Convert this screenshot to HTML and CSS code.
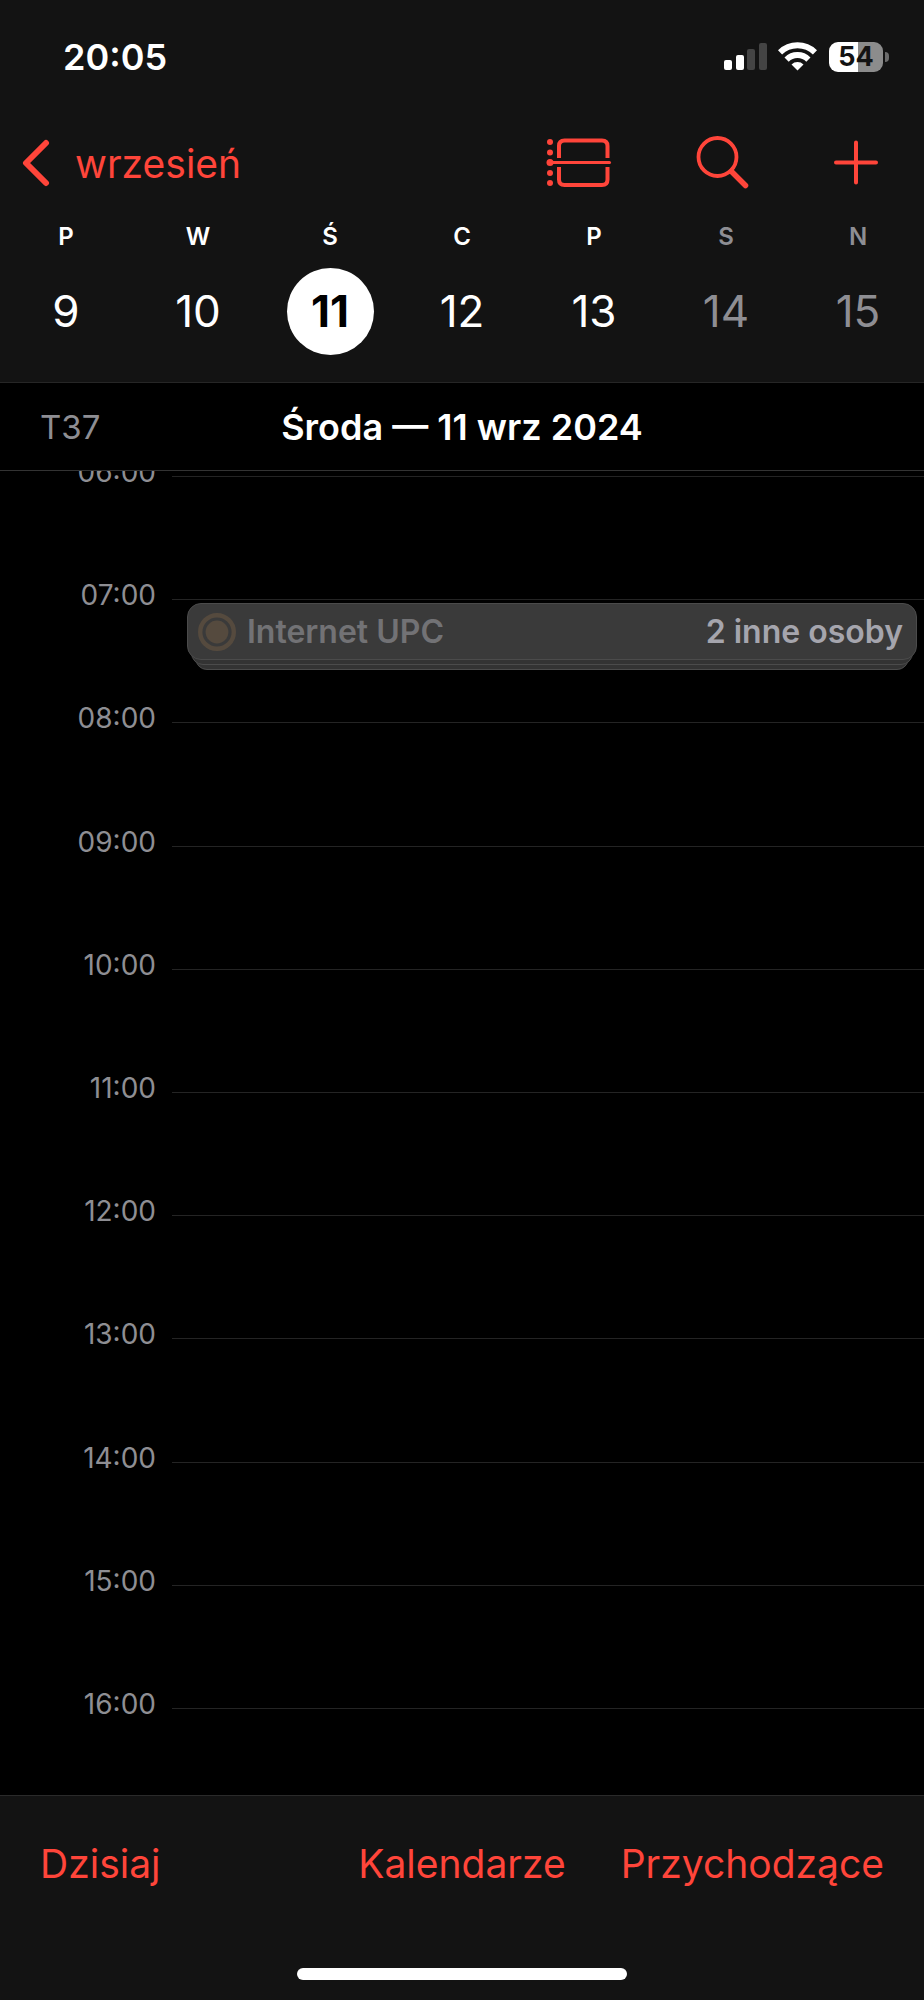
FILE: index.html
```html
<!DOCTYPE html>
<html lang="pl">
<head>
  <meta charset="utf-8">
  <meta name="viewport" content="width=device-width, initial-scale=1">
  <title>Kalendarz</title>
  <link rel="stylesheet" href="styles.css">
</head>
<body>
  <div class="screen">
    <header class="top">
      <div class="status">
        <time class="clock">20:05</time>
        <div class="indicators">
          <svg class="signal" width="44" height="30" viewBox="0 0 44 30" aria-hidden="true">
            <rect x="0" y="18" width="8" height="10" rx="2" fill="#fff"/>
            <rect x="12" y="13" width="8" height="15" rx="2" fill="#fff"/>
            <rect x="23" y="7" width="8" height="21" rx="2" fill="#444"/>
            <rect x="35" y="1" width="8" height="27" rx="2" fill="#444"/>
          </svg>
          <svg class="wifi" width="39" height="30" viewBox="0 0 39 30" aria-hidden="true">
            <g fill="none" stroke="#fff" stroke-width="6">
              <path d="M2 10.400a25 25 0 0 1 35 0"/>
              <path d="M8.600 17.600a15.500 15.500 0 0 1 21.800 0"/>
            </g>
            <path d="M19.500 28.400l-6-6a8.600 8.600 0 0 1 12 0z" fill="#fff"/>
          </svg>
          <div class="battery"><span class="battery-body">54</span><span class="battery-cap"></span></div>
        </div>
      </div>
      <nav class="nav">
        <a class="back" href="#month">
          <svg width="28" height="48" viewBox="0 0 28 48" aria-hidden="true"><path d="M24 4L4 24l20 20" fill="none" stroke="currentColor" stroke-width="6" stroke-linecap="round" stroke-linejoin="round"/></svg>
          <span>wrzesień</span>
        </a>
        <div class="actions">
          <button class="icon-button" type="button" aria-label="Lista">
            <svg width="66" height="54" viewBox="0 0 66 54" aria-hidden="true">
              <g fill="currentColor"><circle cx="4" cy="6" r="3"/><circle cx="4" cy="16.500" r="3"/><circle cx="4" cy="26.500" r="3.500"/><circle cx="4" cy="37" r="3"/><circle cx="4" cy="47" r="3"/></g>
              <g fill="none" stroke="currentColor"><path stroke-width="4" d="M13 22V10q0-5.500 5.500-5.500h37.500q5.500 0 5.500 5.500v12M13 31v12.500q0 5.500 5.500 5.500h37.500q5.500 0 5.500-5.500V31"/><path stroke-width="3" stroke-linecap="round" d="M4 26.500h59.500"/></g>
            </svg>
          </button>
          <button class="icon-button" type="button" aria-label="Szukaj">
            <svg width="54" height="54" viewBox="0 0 54 54" aria-hidden="true"><g fill="none" stroke="currentColor"><circle cx="21.500" cy="21" r="19" stroke-width="3.800"/><path d="M35.500 35.500l14 14" stroke-width="5.500" stroke-linecap="round"/></g></svg>
          </button>
          <button class="icon-button" type="button" aria-label="Dodaj">
            <svg width="44" height="54" viewBox="0 0 44 54" aria-hidden="true"><path d="M2 26.500h40M22 6.500v40" stroke="currentColor" stroke-width="4" stroke-linecap="round"/></svg>
          </button>
        </div>
      </nav>
      <div class="week">
        <div class="day"><span class="day-name">P</span><button class="day-number" type="button">9</button></div>
        <div class="day"><span class="day-name">W</span><button class="day-number" type="button">10</button></div>
        <div class="day"><span class="day-name">Ś</span><button class="day-number selected" type="button" aria-current="date">11</button></div>
        <div class="day"><span class="day-name">C</span><button class="day-number" type="button">12</button></div>
        <div class="day"><span class="day-name">P</span><button class="day-number" type="button">13</button></div>
        <div class="day weekend"><span class="day-name">S</span><button class="day-number" type="button">14</button></div>
        <div class="day weekend"><span class="day-name">N</span><button class="day-number" type="button">15</button></div>
      </div>
    </header>

    <div class="date-bar">
      <span class="week-number">T37</span>
      <h1 class="date-title">Środa — 11 wrz 2024</h1>
    </div>

    <main class="timeline">
      <div class="hour"><span class="hour-label">06:00</span><div class="slot"></div></div>
      <div class="hour">
        <span class="hour-label">07:00</span>
        <div class="slot">
          <button class="event" type="button">
            <span class="event-face">
              <svg width="38" height="38" viewBox="0 0 38 38" aria-hidden="true"><circle cx="19" cy="19" r="16.800" fill="none" stroke="#554a3e" stroke-width="4.400"/><circle cx="19" cy="19" r="11.400" fill="#554a3e"/></svg>
              <span class="event-title">Internet UPC</span>
              <span class="event-people">2 inne osoby</span>
            </span>
          </button>
        </div>
      </div>
      <div class="hour"><span class="hour-label">08:00</span><div class="slot"></div></div>
      <div class="hour"><span class="hour-label">09:00</span><div class="slot"></div></div>
      <div class="hour"><span class="hour-label">10:00</span><div class="slot"></div></div>
      <div class="hour"><span class="hour-label">11:00</span><div class="slot"></div></div>
      <div class="hour"><span class="hour-label">12:00</span><div class="slot"></div></div>
      <div class="hour"><span class="hour-label">13:00</span><div class="slot"></div></div>
      <div class="hour"><span class="hour-label">14:00</span><div class="slot"></div></div>
      <div class="hour"><span class="hour-label">15:00</span><div class="slot"></div></div>
      <div class="hour partial"><span class="hour-label">16:00</span><div class="slot"></div></div>
    </main>

    <footer class="bottom">
      <div class="toolbar">
        <button class="tool" type="button">Dzisiaj</button>
        <button class="tool" type="button">Kalendarze</button>
        <button class="tool" type="button">Przychodzące</button>
      </div>
      <div class="home-indicator"></div>
    </footer>
  </div>
</body>
</html>
```

FILE: styles.css
```css
* {
  box-sizing: border-box;
}

body {
  margin: 0;
  background: #000;
  color: #fff;
  font-family: Inter, "Liberation Sans", sans-serif;
}

button {
  padding: 0;
  border: 0;
  background: none;
  color: inherit;
  font: inherit;
}

svg {
  display: block;
  flex: none;
}

.screen {
  display: flex;
  flex-direction: column;
  min-height: 100vh;
}

.top {
  background: #131313;
  border-bottom: 1px solid #262626;
}

.status {
  display: flex;
  align-items: center;
  justify-content: space-between;
  height: 114px;
  padding: 0 35px 0 63px;
}

.clock {
  font-size: 36px;
  font-weight: 600;
}

.indicators {
  display: flex;
  align-items: center;
  gap: 10px;
}

.battery {
  display: flex;
  align-items: center;
  gap: 2px;
  margin-left: 2px;
}

.battery-body {
  width: 54px;
  border-radius: 9px;
  background: linear-gradient(90deg, #fff 54%, #8c8c8c 54%);
  color: #131313;
  font-size: 27px;
  font-weight: 700;
  line-height: 30px;
  text-align: center;
}

.battery-cap {
  width: 4px;
  height: 10px;
  border-radius: 0 5px 5px 0;
  background: #6c6c6c;
}

.nav {
  display: flex;
  align-items: center;
  justify-content: space-between;
  height: 98px;
  padding: 0 46px 0 22px;
  color: #ff453a;
}

.back {
  display: flex;
  align-items: center;
  gap: 25px;
  color: inherit;
  font-size: 39px;
  text-decoration: none;
}

.actions {
  display: flex;
  align-items: center;
  gap: 84px;
}

.week {
  display: grid;
  grid-template-columns: repeat(7, 1fr);
  padding: 5px 0 27px;
}

.day {
  display: flex;
  flex-direction: column;
  align-items: center;
  gap: 11px;
}

.day-name {
  font-size: 24px;
  font-weight: 600;
  line-height: 40px;
}

.day-number {
  width: 87px;
  height: 87px;
  padding-bottom: 2px;
  border-radius: 50%;
  font-size: 44px;
}

.selected {
  background: #fff;
  color: #000;
  font-weight: 700;
}

.weekend {
  color: #8e8e93;
}

.date-bar {
  display: grid;
  grid-template-columns: 1fr auto 1fr;
  align-items: center;
  height: 88px;
  padding: 0 40px;
  border-bottom: 1px solid #333;
}

.week-number {
  color: #8e8e93;
  font-size: 33px;
}

.date-title {
  margin: 0;
  font-size: 36px;
  font-weight: 600;
}

.timeline {
  display: flex;
  flex: 1;
  flex-direction: column;
  padding-top: 5px;
  overflow: hidden;
}

.hour {
  display: flex;
  flex: 1 0 0;
  gap: 16px;
  min-height: 100px;
}

.partial {
  flex: none;
  min-height: 87px;
}

.hour-label {
  width: 156px;
  margin-top: -21px;
  color: #8e8e93;
  font-size: 28px;
  line-height: 34px;
  text-align: right;
}

.slot {
  flex: 1;
  padding: 3px 7px 0 15px;
  border-top: 1px solid #242424;
}

.event {
  display: block;
  position: relative;
  width: 100%;
  padding-bottom: 10px;
  font-size: 32px;
  font-weight: 600;
}

.event::before,
.event::after {
  position: absolute;
  height: 30px;
  border: 1px solid #4b4b4b;
  border-radius: 12px;
  background: #333;
  content: "";
}

.event::before {
  right: 8px;
  bottom: 0;
  left: 8px;
}

.event::after {
  right: 4px;
  bottom: 5px;
  left: 4px;
}

.event-face {
  display: flex;
  position: relative;
  z-index: 1;
  align-items: center;
  gap: 11px;
  height: 57px;
  padding: 0 13px 0 10px;
  border: 1px solid #4b4b4b;
  border-radius: 14px;
  background: #3a3a3a;
}

.event-title {
  color: #727275;
}

.event-people {
  margin-left: auto;
  color: #a5a5ad;
}

.bottom {
  display: flex;
  flex-direction: column;
  align-items: center;
  justify-content: space-between;
  height: 205px;
  padding: 38px 40px 20px;
  border-top: 1px solid #2a2a2a;
  background: #131313;
}

.toolbar {
  display: grid;
  grid-template-columns: 1fr auto 1fr;
  width: 100%;
  color: #ff453a;
  font-size: 39px;
  line-height: 60px;
}

.tool:first-child {
  justify-self: start;
}

.tool:last-child {
  justify-self: end;
}

.home-indicator {
  width: 39%;
  height: 12px;
  border-radius: 6px;
  background: #fff;
}
```
